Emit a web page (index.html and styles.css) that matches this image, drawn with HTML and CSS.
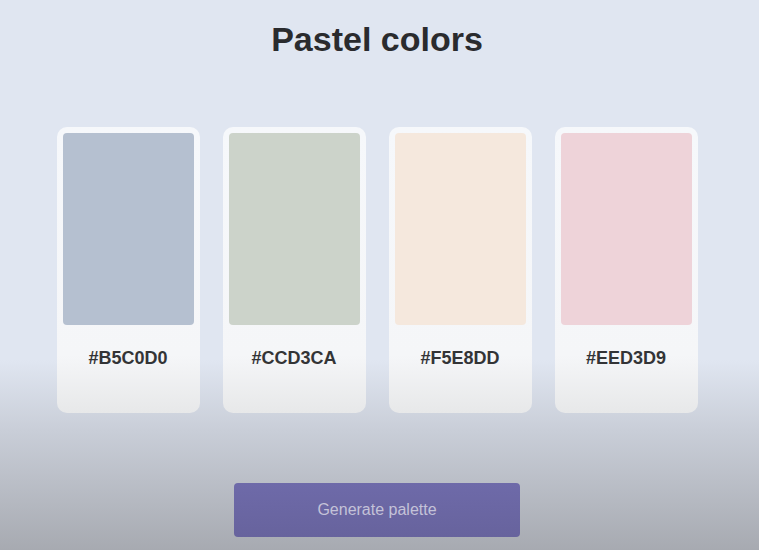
FILE: index.html
```html
<!DOCTYPE html>
<html>
<head>
<meta charset="utf-8">
<link rel="stylesheet" href="styles.css">
</head>
<body>
<main class="page">
  <h1 class="title">Pastel colors</h1>
  <div class="palette">
    <div class="card"><div class="swatch" style="background:#B5C0D0"></div><div class="code">#B5C0D0</div></div>
    <div class="card"><div class="swatch" style="background:#CCD3CA"></div><div class="code">#CCD3CA</div></div>
    <div class="card"><div class="swatch" style="background:#F5E8DD"></div><div class="code">#F5E8DD</div></div>
    <div class="card"><div class="swatch" style="background:#EED3D9"></div><div class="code">#EED3D9</div></div>
  </div>
  <button class="generate">Generate palette</button>
</main>
</body>
</html>
```
FILE: styles.css
```css
html, body {
  margin: 0;
  height: 100%;
}
body {
  font-family: "Liberation Sans", Arial, sans-serif;
  background: linear-gradient(to bottom, #e0e6f1 0px, #e0e6f1 360px, #c9ced8 430px, #a7aab1 550px);
  overflow: hidden;
}
.page {
  display: flex;
  flex-direction: column;
  align-items: center;
  padding-right: 5px;
}
.title {
  margin: 20px 0 0;
  font-size: 34px;
  line-height: 38px;
  font-weight: 700;
  color: #2a2b2e;
}
.palette {
  display: flex;
  gap: 23px;
  margin-top: 69px;
}
.card {
  width: 143px;
  height: 286px;
  box-sizing: border-box;
  padding: 6px;
  border-radius: 10px;
  background: linear-gradient(to bottom, #f6f8fb 0%, #f5f6f8 80%, #e7e8e9 100%);
  display: flex;
  flex-direction: column;
}
.swatch {
  height: 192px;
  border-radius: 4px;
}
.code {
  margin-top: 23px;
  text-align: center;
  font-size: 18px;
  font-weight: 700;
  color: #333436;
}
.generate {
  margin-top: 70px;
  width: 286px;
  height: 54px;
  border: none;
  border-radius: 4px;
  background: linear-gradient(to bottom, #6e6aa9, #67639d);
  color: #c4c2d8;
  font-family: "Liberation Sans", Arial, sans-serif;
  font-size: 16px;
}
```
